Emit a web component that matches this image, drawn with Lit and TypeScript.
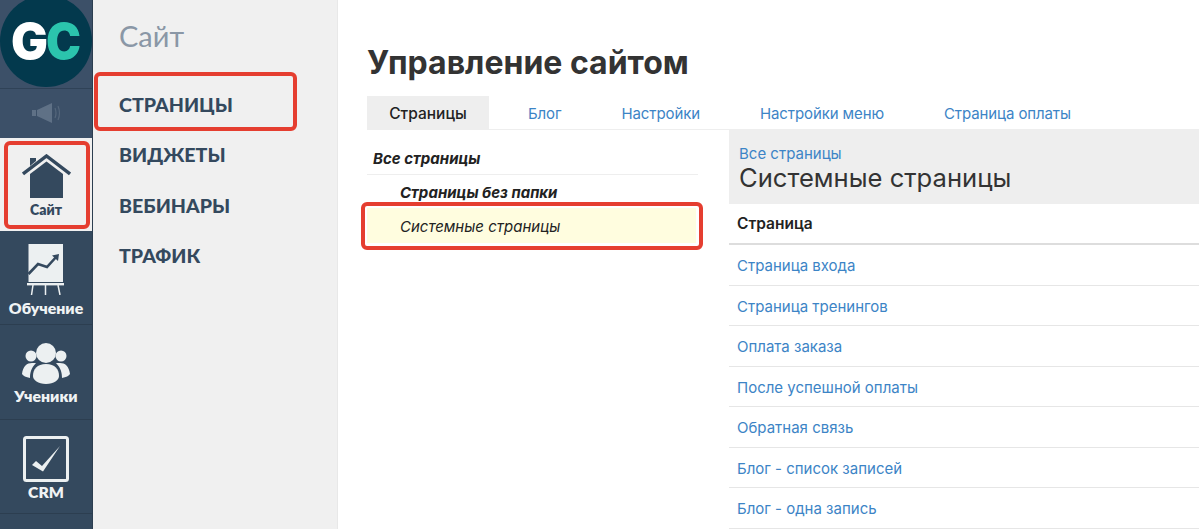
import { LitElement, html, css } from "lit";
import { customElement } from "lit/decorators.js";

const pages = ["Страница входа", "Страница тренингов", "Оплата заказа", "После успешной оплаты", "Обратная связь", "Блог - список записей", "Блог - одна запись"];
const tabs = ["Блог", "Настройки", "Настройки меню", "Страница оплаты"];
const menu = ["ВИДЖЕТЫ", "ВЕБИНАРЫ", "ТРАФИК"];

@customElement("app-root")
export class AppRoot extends LitElement {
  static styles = css`
    :host { display: block; width: 1199px; height: 529px; overflow: hidden; background: #fff; font-family: Inter, "Liberation Sans", sans-serif; }
    * { box-sizing: border-box; }
    .page { display: flex; height: 529px; }
    .rail { width: 93px; flex: none; background: #34495e; border-right: 1px solid #2c3e50; display: flex; flex-direction: column; font-family: Lato, "Open Sans", sans-serif; }
    .logo-cell { height: 89px; background: #3c5068; border-bottom: 1px solid #2f4257; overflow: hidden; }
    .logo { display: block; }
    .sound { height: 49px; background: #3c5068; display: flex; align-items: center; justify-content: center; padding-bottom: 2px; }
    .item { height: 94px; flex: none; display: flex; flex-direction: column; align-items: center; color: #f0f3f4; font-size: 15.8px; font-weight: 800; border-bottom: 1px solid #2c3e50; line-height: 16px; }
    .item svg { display: block; flex: none; }
    .item.active { height: 93px; background: #f0f0f0; color: #34495e; position: relative; border-bottom: 0; padding-top: 16px; font-size: 14px; }
    .item.active span { margin-top: 3px; }
    .item.teach { padding-top: 13px; }
    .item.teach span { margin-top: 5px; }
    .item.students { height: 95px; padding-top: 18px; }
    .item.students span { margin-top: 4px; }
    .item.crm { padding-top: 16px; }
    .item.crm span { margin-top: 2px; }
    .box { position: absolute; border: 4px solid #e53e30; border-radius: 6px; pointer-events: none; }
    .box.a { left: 4px; top: 3px; width: 86px; height: 88px; }
    .side { width: 245px; flex: none; background: #f0f0f0; padding: 18px 0 0 26px; font-family: Lato, "Open Sans", sans-serif; position: relative; border-right: 1px solid #e8e8e8; }
    .side h2 { margin: 0 0 33px; font-size: 29px; font-weight: 400; color: #8a97a6; line-height: 36px; }
    .side a { display: block; height: 50.4px; font-size: 19.6px; font-weight: 900; color: #34495e; line-height: 35px; }
    .box.b { left: 1px; top: 72px; width: 203px; height: 59px; }
    .main { flex: 1; min-width: 0; padding: 40px 0 0 29px; }
    h1 { margin: 0 0 11px; font-size: 32px; line-height: 46px; font-weight: 700; color: #333; height: 45px; }
    .tabs { display: flex; height: 34px; border-bottom: 1px solid #eee; font-size: 15px; line-height: 35px; letter-spacing: -0.1px; }
    .tab { color: #3c84c6; margin-right: 60px; }
    .tab.first { margin-left: 39px; }
    .tab.on { background: #eee; color: #222; font-weight: 500; font-size: 15.5px; letter-spacing: 0; width: 122px; text-align: center; margin: 0; }
    .cols { display: flex; }
    .tree { width: 331px; flex: none; margin-right: 31px; font-size: 15px; font-style: italic; color: #222; position: relative; padding-top: 13px; }
    .tree .all { height: 33px; margin-top: -1px; padding-left: 6px; font-weight: 700; border-bottom: 1px solid #eee; line-height: 33px; width: 331px; }
    .tree .nofolder { height: 33px; line-height: 35px; padding-left: 33px; font-weight: 700; }
    .tree .sys { height: 35px; line-height: 37px; padding-left: 33px; background: #fffddf; width: 329px; }
    .box.c { left: -6px; top: 72px; width: 342px; height: 48px; }
    .right { flex: 1; min-width: 0; }
    .head { height: 74px; background: #eee; padding: 15px 0 0 10px; }
    .head a { display: block; font-size: 15px; line-height: 17px; color: #3c84c6; }
    .head div { font-size: 25.6px; line-height: 32px; color: #333; }
    .th { height: 41px; line-height: 40px; padding-left: 8px; font-size: 15.5px; font-weight: 600; color: #222; border-bottom: 2px solid #ddd; }
    .td { height: 40.5px; line-height: 41px; padding-left: 8px; font-size: 15px; color: #3c84c6; border-bottom: 1px solid #e6e6e6; white-space: nowrap; }
  `;

  render() {
    return html`<div class="page">
      <nav class="rail">
        <div class="logo-cell">
          <svg class="logo" width="92" height="89" viewBox="0 0 92 89">
            <circle cx="46" cy="41" r="46" fill="#03394d"></circle>
            <text x="11" y="59" font-family="Inter, sans-serif" font-size="50" font-weight="900" fill="#fff" textLength="37" lengthAdjust="spacingAndGlyphs">G</text>
            <text x="46" y="59" font-family="Inter, sans-serif" font-size="50" font-weight="900" fill="#2bc4ad" textLength="35" lengthAdjust="spacingAndGlyphs">C</text>
          </svg>
        </div>
        <div class="sound">
          <svg width="29" height="20" viewBox="0 0 29 20" fill="none">
            <rect x="0" y="7" width="4" height="6" fill="#5f7186"></rect>
            <path d="M5 7 L20 0 V20 L5 13 Z" fill="#5f7186"></path>
            <path d="M23 5 Q25 10 23 15 M26 3 Q29 10 26 17" stroke="#55677c" stroke-width="1.2"></path>
          </svg>
        </div>
        <div class="item active">
          <svg width="49" height="45" viewBox="0 0 49 45">
            <path d="M1 20 L24.5 2 L48 20" fill="none" stroke="#34495e" stroke-width="3.4"></path>
            <path d="M8 4 H14 V7 L8 12 Z" fill="#34495e"></path>
            <path d="M24.5 7.5 L41 20 V44 H8 V20 Z" fill="#34495e"></path>
          </svg>
          <span>Сайт</span>
          <div class="box a"></div>
        </div>
        <div class="item teach">
          <svg width="38" height="51" viewBox="0 0 38 51">
            <rect x="1.5" y="0" width="34.5" height="38" fill="#ecf0f1"></rect>
            <rect x="0" y="39" width="37" height="2.4" fill="#ecf0f1"></rect>
            <path d="M1.5 30 L11 20 L20 23 L30 12" fill="none" stroke="#34495e" stroke-width="2.6"></path>
            <path d="M25 11.5 L32 10 L31 17 Z" fill="#34495e"></path>
            <path d="M6 41 L4.5 51 M18.5 41 V51 M31 41 L33 51" stroke="#ecf0f1" stroke-width="1.5"></path>
          </svg>
          <span>Обучение</span>
        </div>
        <div class="item students">
          <svg width="48" height="41" viewBox="0 0 48 41" fill="#ecf0f1">
            <circle cx="9" cy="13" r="5.5"></circle>
            <circle cx="39" cy="13" r="5.5"></circle>
            <path d="M0 31 C1 23 5 20 10 20 L14 20 C9 25 8 30 8 35 C4 34 1 33 0 31 Z"></path>
            <path d="M48 31 C47 23 43 20 38 20 L34 20 C39 25 40 30 40 35 C44 34 47 33 48 31 Z"></path>
            <circle cx="24" cy="10" r="10"></circle>
            <path d="M11 33 C11 26 15 21 24 21 C33 21 37 26 37 33 C37 37 32 41 24 41 C16 41 11 37 11 33 Z"></path>
          </svg>
          <span>Ученики</span>
        </div>
        <div class="item crm">
          <svg width="46" height="46" viewBox="0 0 46 46" fill="none">
            <rect x="1.5" y="1.5" width="43" height="43" rx="2" stroke="#ecf0f1" stroke-width="3"></rect>
            <path d="M9 29 L13 25 L19 30 L37 10 L20 35.5 Z" fill="#ecf0f1"></path>
          </svg>
          <span>CRM</span>
        </div>
      </nav>
      <aside class="side">
        <h2>Сайт</h2>
        <a>СТРАНИЦЫ</a>
        ${menu.map((m) => html`<a>${m}</a>`)}
        <div class="box b"></div>
      </aside>
      <main class="main">
        <h1>Управление сайтом</h1>
        <div class="tabs">
          <div class="tab on">Страницы</div>
          ${tabs.map((t, i) => html`<div class="tab ${i === 0 ? "first" : ""}">${t}</div>`)}
        </div>
        <div class="cols">
          <div class="tree">
            <div class="all">Все страницы</div>
            <div class="nofolder">Страницы без папки</div>
            <div class="sys">Системные страницы</div>
            <div class="box c"></div>
          </div>
          <div class="right">
            <div class="head"><a>Все страницы</a><div>Системные страницы</div></div>
            <div class="th">Страница</div>
            ${pages.map((p) => html`<div class="td">${p}</div>`)}
          </div>
        </div>
      </main>
    </div>`;
  }
}
